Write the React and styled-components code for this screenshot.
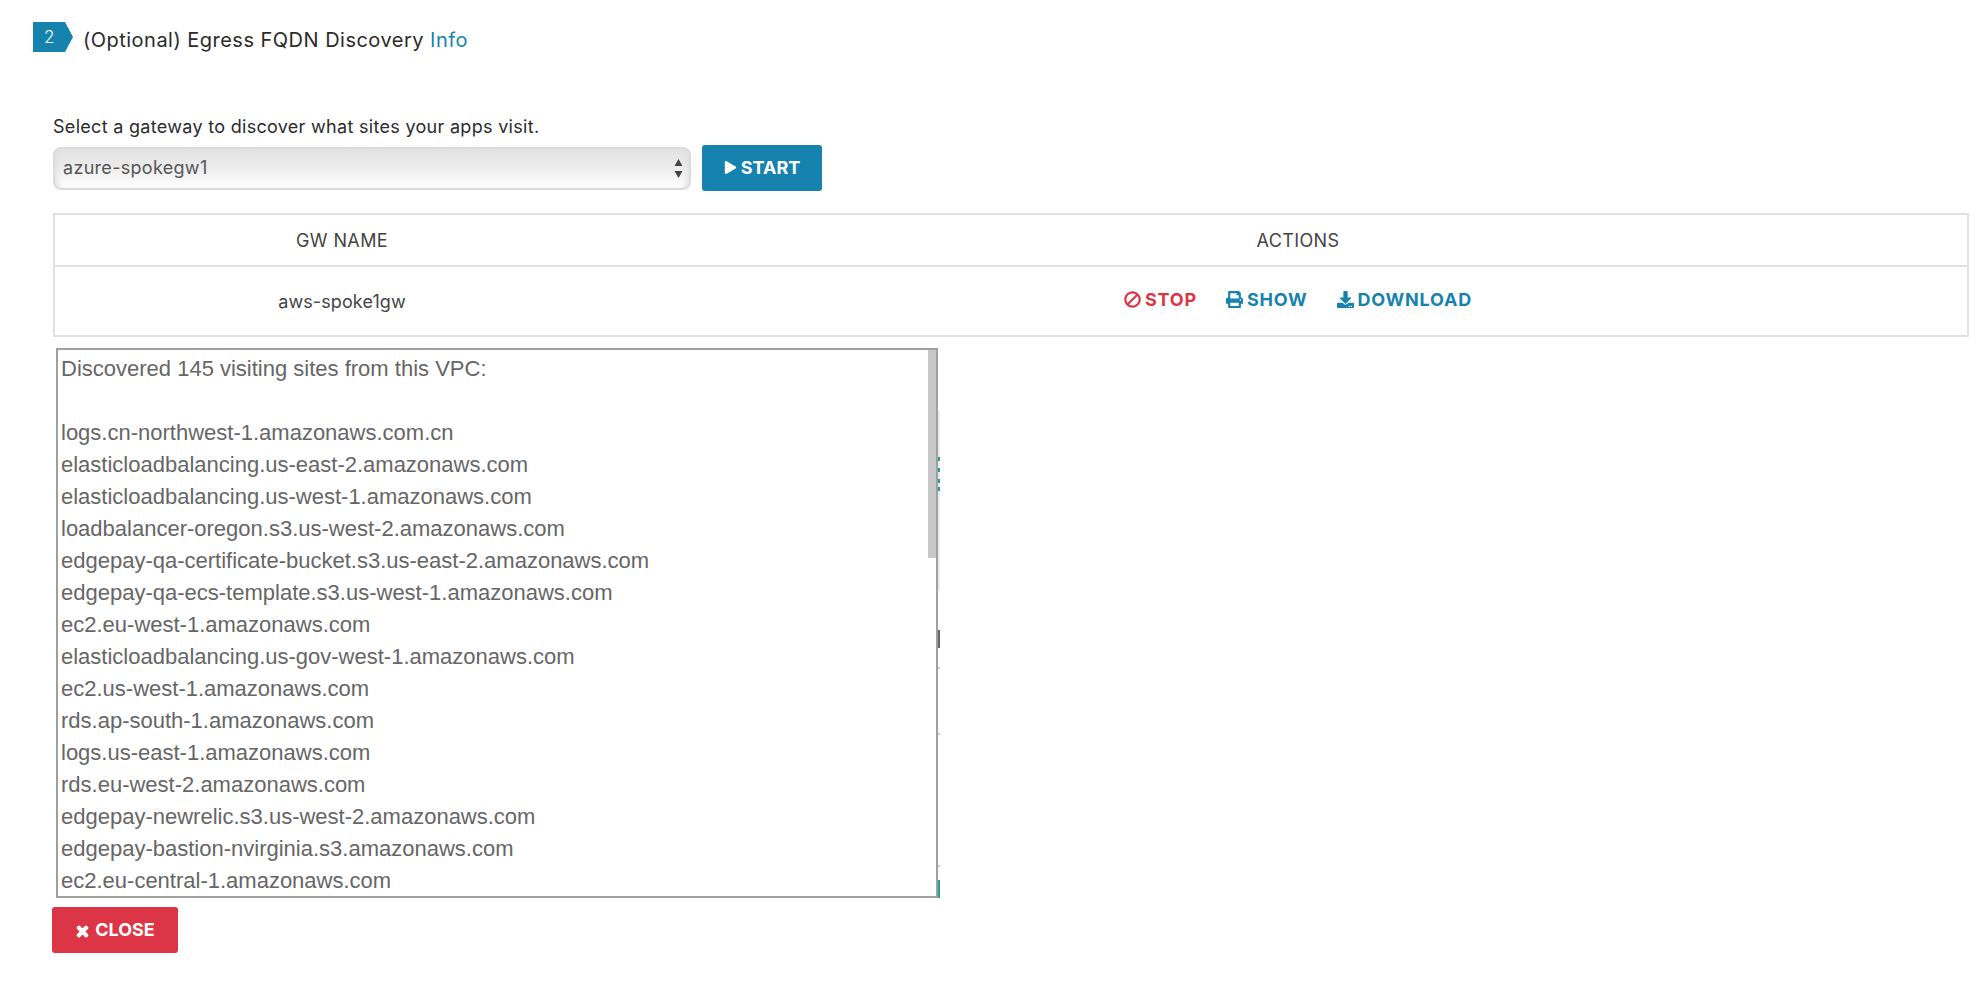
import React from "react";
import styled, { createGlobalStyle } from "styled-components";
import { FaBan, FaPrint, FaDownload, FaTimes, FaPlay } from "react-icons/fa";

const Global = createGlobalStyle`
  html, body { margin: 0; padding: 0; background: #fff; }
  body { font-family: Inter, "Noto Sans", sans-serif; color: #212529; }
`;

const Page = styled.div`
  width: 1980px;
  height: 1000px;
  box-sizing: border-box;
  padding: 22px 11px 0 33px;
  overflow: hidden;
`;

const StepHeader = styled.div`
  display: flex;
  align-items: flex-start;
  height: 30px;
  gap: 10px;
`;

const StepBadge = styled.div`
  width: 40px;
  height: 30px;
  box-sizing: border-box;
  padding: 0 0 1px 11px;
  display: flex;
  align-items: center;
  background: #1683ae;
  color: #fff;
  font-size: 17px;
  font-weight: 300;
  clip-path: polygon(0 0, 32px 0, 40px 50%, 32px 100%, 0 100%);
`;

const StepTitle = styled.h2`
  margin: 3px 0 0;
  font-size: 20px;
  font-weight: 400;
  line-height: 30px;
  color: #2b2b2b;
  letter-spacing: 0.48px;
`;

const InfoLink = styled.a`
  color: #1683ae;
`;

const Body = styled.div`
  padding: 63px 0 0 20px;
`;

const Hint = styled.p`
  margin: 0 0 7px;
  font-size: 18px;
  line-height: 23px;
  color: #2b2b2b;
  letter-spacing: 0.3px;
`;

const GatewayRow = styled.div`
  display: flex;
  align-items: center;
  gap: 11px;
`;

const SelectWrap = styled.div`
  position: relative;
  width: 638px;
  height: 43px;
`;

const GatewaySelect = styled.select`
  appearance: none;
  width: 100%;
  height: 100%;
  box-sizing: border-box;
  padding: 0 8px 2px;
  border: 2px solid #dcdcdc;
  border-radius: 8px;
  background: linear-gradient(to bottom, #e2e2e2 0%, #ececec 45%, #ffffff 100%);
  box-shadow: inset 6px 0 6px -4px #e0e0e0, inset -6px 0 6px -4px #e0e0e0;
  font-family: inherit;
  font-size: 18px;
  letter-spacing: 0.3px;
  color: #555;
`;

const SelectArrows = styled.svg`
  position: absolute;
  right: 8px;
  top: 12px;
  width: 9px;
  height: 19px;
  pointer-events: none;
`;

const ActionButton = styled.button`
  display: inline-flex;
  align-items: center;
  justify-content: center;
  gap: ${(p) => p.$gap}px;
  width: ${(p) => p.$width}px;
  height: 46px;
  padding: 0 0 2px;
  border: 0;
  border-radius: 3px;
  background: ${(p) => p.$bg};
  color: #fff;
  font-family: inherit;
  font-size: 18px;
  font-weight: 700;
  svg { font-size: ${(p) => p.$icon}px; }
`;

const CloseIcon = styled(FaTimes)`
  margin-top: 4px;
  stroke: currentColor;
  stroke-width: 50px;
`;

const BanIcon = styled(FaBan)`
  transform: scaleX(-1);
`;

const Table = styled.table`
  width: 1916px;
  margin-top: 22px;
  border-collapse: collapse;
  table-layout: fixed;
  color: #444;
  font-size: 18px;
  text-align: center;
  border: 2px solid #dee2e6;
  th, td { border: 0; border-top: 2px solid #dee2e6; padding: 0; font-weight: 400; }
  th { height: 50px; letter-spacing: 0.4px; }
  td { height: 68px; letter-spacing: 0.1px; }
`;

const Actions = styled.div`
  display: flex;
  justify-content: center;
  gap: 29px;
  padding-bottom: 4px;
`;

const TableAction = styled.a`
  display: inline-flex;
  align-items: center;
  gap: 4px;
  font-size: 18px;
  font-weight: 700;
  letter-spacing: 0.8px;
  color: ${(p) => p.$color};
  svg { font-size: 17px; }
`;

const ResultRow = styled.div`
  position: relative;
  width: 885px;
  margin: 11px 0 0 3px;
`;

const SiteList = styled.pre`
  box-sizing: border-box;
  width: 882px;
  height: 550px;
  margin: 0;
  padding: 3px 3px;
  border: 2px solid #a0a0a0;
  overflow: hidden;
  font-family: "Liberation Sans", Arial, sans-serif;
  font-size: 22px;
  line-height: 32px;
  color: #666;
`;

const ScrollThumb = styled.div`
  position: absolute;
  top: 2px;
  left: 872px;
  width: 8px;
  height: 208px;
  background: #c8c8c8;
`;

const BackdropSliver = styled.div`
  position: absolute;
  left: 882px;
  top: ${(p) => p.$top}px;
  width: 2px;
  height: ${(p) => p.$h}px;
  background: ${(p) => p.$c};
`;

const CloseRow = styled.div`
  margin: 9px 0 0 -1px;
`;

const sites = `Discovered 145 visiting sites from this VPC:

logs.cn-northwest-1.amazonaws.com.cn
elasticloadbalancing.us-east-2.amazonaws.com
elasticloadbalancing.us-west-1.amazonaws.com
loadbalancer-oregon.s3.us-west-2.amazonaws.com
edgepay-qa-certificate-bucket.s3.us-east-2.amazonaws.com
edgepay-qa-ecs-template.s3.us-west-1.amazonaws.com
ec2.eu-west-1.amazonaws.com
elasticloadbalancing.us-gov-west-1.amazonaws.com
ec2.us-west-1.amazonaws.com
rds.ap-south-1.amazonaws.com
logs.us-east-1.amazonaws.com
rds.eu-west-2.amazonaws.com
edgepay-newrelic.s3.us-west-2.amazonaws.com
edgepay-bastion-nvirginia.s3.amazonaws.com
ec2.eu-central-1.amazonaws.com`;

const slivers = [
  { t: 63, h: 180, c: "#ececec" },
  { t: 109, h: 4, c: "#2a9d8f" },
  { t: 120, h: 4, c: "#2a9d8f" },
  { t: 131, h: 4, c: "#2a9d8f" },
  { t: 139, h: 4, c: "#2a9d8f" },
  { t: 282, h: 18, c: "#666" },
  { t: 319, h: 2, c: "#ccc" },
  { t: 385, h: 2, c: "#ccc" },
  { t: 517, h: 2, c: "#ccc" },
  { t: 532, h: 18, c: "#2a9d8f" },
];

export default function App() {
  return (
    <Page>
      <Global />
      <StepHeader>
        <StepBadge>2</StepBadge>
        <StepTitle>
          (Optional) Egress FQDN Discovery <InfoLink>Info</InfoLink>
        </StepTitle>
      </StepHeader>
      <Body>
        <Hint>Select a gateway to discover what sites your apps visit.</Hint>
        <GatewayRow>
          <SelectWrap>
            <GatewaySelect defaultValue="azure-spokegw1">
              <option>azure-spokegw1</option>
            </GatewaySelect>
            <SelectArrows viewBox="0 0 9 19">
              <path d="M4.5 0 L8.5 7 L0.5 7 Z M4.5 19 L8.5 12 L0.5 12 Z" fill="#444" />
            </SelectArrows>
          </SelectWrap>
          <ActionButton $width={120} $bg="#1683ae" $icon={13} $gap={4}>
            <FaPlay /> START
          </ActionButton>
        </GatewayRow>
        <Table>
          <colgroup>
            <col width="575" />
            <col />
          </colgroup>
          <thead>
            <tr>
              <th>GW NAME</th>
              <th>ACTIONS</th>
            </tr>
          </thead>
          <tbody>
            <tr>
              <td>aws-spoke1gw</td>
              <td>
                <Actions>
                  <TableAction $color="#dc3545">
                    <BanIcon /> STOP
                  </TableAction>
                  <TableAction $color="#1683ae">
                    <FaPrint /> SHOW
                  </TableAction>
                  <TableAction $color="#1683ae">
                    <FaDownload /> DOWNLOAD
                  </TableAction>
                </Actions>
              </td>
            </tr>
          </tbody>
        </Table>
        <ResultRow>
          <SiteList>{sites}</SiteList>
          <ScrollThumb />
          {slivers.map((s) => (
            <BackdropSliver key={s.t} $top={s.t} $h={s.h} $c={s.c} />
          ))}
        </ResultRow>
        <CloseRow>
          <ActionButton $width={126} $bg="#dc3545" $icon={15} $gap={5}>
            <CloseIcon /> CLOSE
          </ActionButton>
        </CloseRow>
      </Body>
    </Page>
  );
}
